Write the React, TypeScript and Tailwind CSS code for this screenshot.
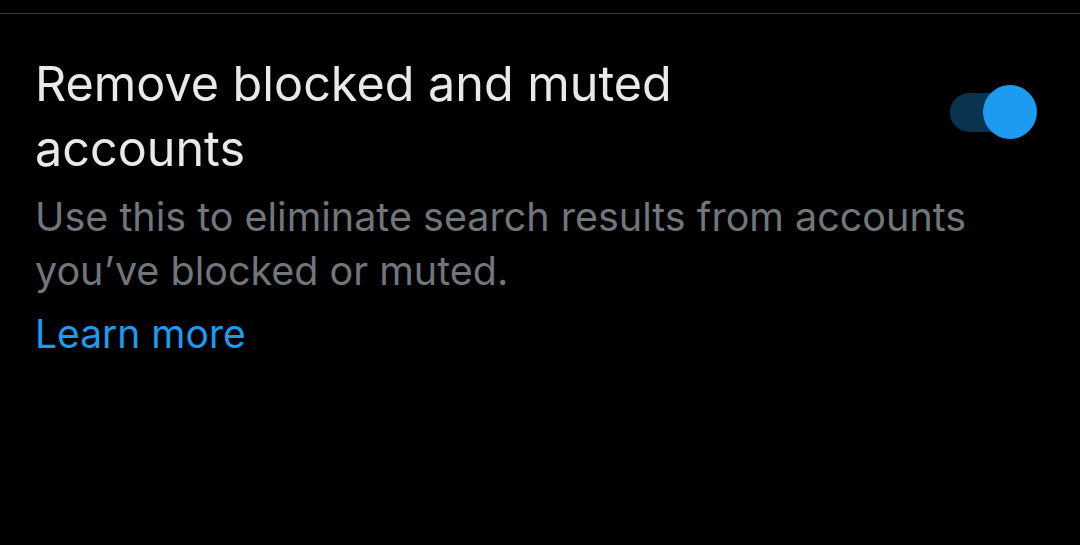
import React from "react";

export default function App() {
  return (
    <div className="w-[1080px] h-[545px] bg-black overflow-hidden" style={{ fontFamily: "Inter, 'Noto Sans', sans-serif" }}>
      <div className="pt-[13px]">
        <div className="h-px bg-[#3a3d40]" />
      </div>
      <div className="flex items-start justify-between pl-[35px] pr-[43px] pt-[37px]">
        <div className="flex flex-col min-w-0 flex-1">
          <div className="text-[#e7e9ea] text-[48.5px] leading-[65px] w-[680px]">
            Remove blocked and muted accounts
          </div>
          <div className="text-[#71767b] text-[39.5px] leading-[54px] mt-[9px] w-[960px]">
            Use this to eliminate search results from accounts you’ve blocked or muted.
          </div>
          <div className="text-[#1d9bf0] text-[39px] leading-[62px] mt-[5px]">Learn more</div>
        </div>
        <div className="relative w-[87px] h-[56px] mt-[34px] shrink-0">
          <div className="absolute left-0 top-[8px] w-[70px] h-[39px] rounded-full bg-[#0a3350]" />
          <div className="absolute right-0 top-0 w-[54px] h-[54px] rounded-full bg-[#1d9bf0]" />
        </div>
      </div>
    </div>
  );
}
